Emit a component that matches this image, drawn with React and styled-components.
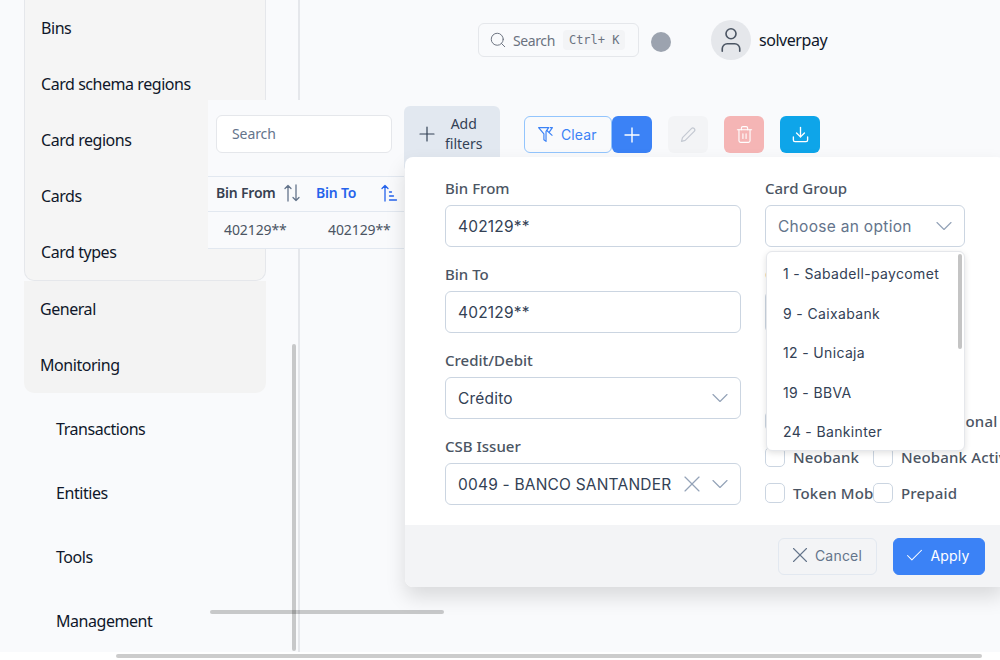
import React from 'react';
import styled, { createGlobalStyle } from 'styled-components';
import { Search, X, ChevronDown, Plus, Trash2, Download, Check, User } from 'lucide-react';

const Global = createGlobalStyle`
  html, body { margin: 0; padding: 0; height: 100%; overflow: hidden; background: #fff; }
  * { box-sizing: border-box; }
  body { font-family: "Noto Sans", sans-serif; color: #111827; }
`;

const FORM_FONT = '"Inter", "Noto Sans", sans-serif';

const Page = styled.div`
  position: relative;
  width: 1000px;
  height: 660px;
  overflow: hidden;
  background: #fff;
`;
const Viewport = styled.div`
  display: flex;
  height: 652px;
  background: #f9fafc;
`;
const Sidebar = styled.aside`
  width: 300px;
  flex: none;
  padding-left: 24px;
  border-right: 2px solid #e5e7eb;
  overflow: hidden;
`;
const NavCard = styled.div`
  width: 242px;
  background: #f5f5f5;
  border: 1px solid #e5e7eb;
  border-top: none;
  border-radius: 0 0 10px 10px;
`;
const NavGroup = styled.div`
  width: 242px;
  margin-bottom: 4px;
  background: #f3f3f3;
  border-radius: 0 0 10px 10px;
`;
const NavItem = styled.div`
  display: flex;
  align-items: center;
  height: ${p => p.$h || 56}px;
  padding-left: ${p => p.$indent || 0}px;
  font-size: 16px;
  color: #0f172a;
  letter-spacing: -0.45px;
`;
const Main = styled.main`
  flex: 1;
  min-width: 0;
`;
const Header = styled.header`
  display: flex;
  align-items: center;
  height: 80px;
  padding-left: 178px;
`;
const SearchBox = styled.div`
  display: flex;
  align-items: center;
  width: 161px;
  height: 34px;
  padding: 0 10px;
  gap: 6px;
  background: #f9fafc;
  border: 1px solid #e5e7eb;
  border-radius: 6px;
  color: #6b7280;
  font-size: 14px;
  letter-spacing: -0.4px;
`;
const Kbd = styled.span`
  margin-left: 2px;
  padding: 3px 5px 3px 6px;
  background: #f3f4f6;
  border-radius: 4px;
  font: 12px/14px "DejaVu Sans Mono", monospace;
  white-space: nowrap;
  letter-spacing: 0;
`;
const Dot = styled.span`
  width: 20px;
  height: 20px;
  margin: 3px 40px 0 12px;
  border-radius: 50%;
  background: #9ca3af;
`;
const Avatar = styled.span`
  display: flex;
  align-items: center;
  justify-content: center;
  width: 40px;
  height: 40px;
  border-radius: 50%;
  background: #e5e7eb;
  color: #4b5563;
`;
const UserName = styled.span`
  margin-left: 8px;
  font-size: 16px;
  letter-spacing: -0.45px;
  color: #0f172a;
`;
const Toolbar = styled.div`
  display: flex;
  align-items: flex-start;
  margin: 26px 0 0 104px;
`;
const AddFilters = styled.button`
  display: flex;
  align-items: center;
  gap: 6px;
  width: 96px;
  height: 66px;
  padding: 0 0 10px 11px;
  background: #e2e8f0;
  border: none;
  border-radius: 6px;
  color: #334155;
  font: 14px/20px "Noto Sans", sans-serif;
  text-align: center;
`;
const ClearButton = styled.button`
  display: flex;
  align-items: center;
  gap: 7px;
  width: 88px;
  height: 37px;
  margin: 10px 0 0 24px;
  padding: 0 0 0 12px;
  background: #f9fafc;
  border: 1px solid #93c5fd;
  border-radius: 6px;
  color: #3b82f6;
  font: 14px ${FORM_FONT};
  letter-spacing: 0.1px;
`;
const IconButton = styled.button`
  display: flex;
  align-items: center;
  justify-content: center;
  width: 40px;
  height: 37px;
  margin: 10px 0 0 ${p => p.$gap || 0}px;
  padding: 0;
  border: none;
  border-radius: 6px;
  background: ${p => p.$bg};
  color: ${p => p.$fg};
`;
const TableCard = styled.section`
  position: absolute;
  left: 208px;
  top: 100px;
  width: 196px;
  height: 149px;
  background: #f9fafc;
  border-bottom: 1px solid #e2e8f0;
`;
const TableSearch = styled.div`
  width: 176px;
  height: 38px;
  margin: 15px 0 23px 8px;
  padding: 0 0 2px 15px;
  display: flex;
  align-items: center;
  background: #fff;
  border: 1px solid #e5e7eb;
  border-radius: 6px;
  font-size: 14px;
  letter-spacing: -0.1px;
  color: #64748b;
`;
const HeadRow = styled.div`
  display: grid;
  grid-template-columns: 100px 96px;
  height: 36px;
  border-top: 1px solid #e2e8f0;
  border-bottom: 1px solid #e2e8f0;
`;
const HeadCell = styled.div`
  display: flex;
  align-items: center;
  justify-content: space-between;
  padding: 0 ${p => p.$pr}px 3px 8px;
  font-size: 14px;
  font-weight: 600;
  letter-spacing: -0.2px;
  color: ${p => (p.$active ? '#2563eb' : '#374151')};
  white-space: nowrap;
`;
const BodyRow = styled.div`
  display: grid;
  grid-template-columns: 104px 92px;
  height: 36px;
`;
const BodyCell = styled.div`
  display: flex;
  align-items: center;
  padding: 0 0 2px 16px;
  font-size: 14px;
  letter-spacing: -0.1px;
  color: #4b5563;
`;
const FilterPanel = styled.section`
  position: absolute;
  left: 405px;
  top: 157px;
  width: 600px;
  height: 430px;
  display: flex;
  flex-direction: column;
  background: #fff;
  border-radius: 8px;
  box-shadow: 0 10px 20px rgba(0, 0, 0, 0.13);
  font-family: ${FORM_FONT};
`;
const PanelBody = styled.div`
  flex: 1;
  display: grid;
  grid-template-columns: 296px 235px;
  column-gap: 24px;
  padding: 20px 0 0 40px;
`;
const Column = styled.div`
  display: flex;
  flex-direction: column;
  gap: 16px;
  min-width: 0;
`;
const Field = styled.div`
  width: ${p => p.$w || 296}px;
`;
const Label = styled.div`
  height: 24px;
  margin-bottom: 4px;
  font: 500 15px/23px "Noto Sans", sans-serif;
  color: #4b5563;
`;
const Input = styled.div`
  display: flex;
  align-items: center;
  justify-content: space-between;
  height: 42px;
  padding: 0 6px 0 12px;
  background: #fff;
  border: 1px solid #cbd5e1;
  border-radius: 6px;
  font-size: 15.5px;
  letter-spacing: ${p => (p.$placeholder ? 0.3 : 0.2)}px;
  color: ${p => (p.$placeholder ? '#64748b' : '#334155')};
  white-space: nowrap;
`;
const InputIcons = styled.span`
  display: flex;
  align-items: center;
  color: #94a3b8;
`;
const Dropdown = styled.div`
  position: absolute;
  left: 361px;
  top: 94px;
  width: 199px;
  height: 200px;
  padding-top: 2px;
  overflow: hidden;
  background: #fff;
  border: 1px solid #e5e7eb;
  border-radius: 6px;
  box-shadow: 0 2px 6px rgba(0, 0, 0, 0.12);
`;
const Option = styled.div`
  display: flex;
  align-items: center;
  height: 39.5px;
  padding-left: 16px;
  font-size: 14px;
  letter-spacing: 0.35px;
  color: #334155;
  white-space: nowrap;
`;
const DropThumb = styled.span`
  position: absolute;
  right: 2px;
  top: 2px;
  width: 4px;
  height: 95px;
  border-radius: 2px;
  background: #c4c4c4;
`;
const CheckGrid = styled.div`
  display: grid;
  grid-template-columns: 108px 127px;
  row-gap: 16px;
  margin-top: 62px;
`;
const CheckItem = styled.div`
  display: flex;
  align-items: center;
  gap: 8px;
  height: 20px;
  overflow: hidden;
  white-space: nowrap;
  font: 500 15px/20px "Noto Sans", sans-serif;
  letter-spacing: 0.15px;
  color: #4b5563;
`;
const Box = styled.span`
  flex: none;
  width: 20px;
  height: 20px;
  background: #fff;
  border: 1px solid #cbd5e1;
  border-radius: 5px;
`;
const PanelFooter = styled.footer`
  display: flex;
  justify-content: flex-end;
  gap: 16px;
  height: 62px;
  padding: 13px 20px 0 0;
  background: #f3f4f6;
  border-radius: 0 0 8px 8px;
`;
const FooterButton = styled.button`
  display: flex;
  align-items: center;
  justify-content: center;
  gap: ${p => (p.$primary ? 5 : 2)}px;
  width: ${p => p.$w}px;
  height: 37px;
  padding: 0 ${p => (p.$primary ? 4 : 6)}px 3px 0;
  border: 1px solid ${p => (p.$primary ? '#3b82f6' : '#e2e8f0')};
  border-radius: 6px;
  background: ${p => (p.$primary ? '#3b82f6' : 'transparent')};
  color: ${p => (p.$primary ? '#fff' : '#64748b')};
  font: 14px ${FORM_FONT};
  letter-spacing: 0.2px;
`;
const Scrollbar = styled.span`
  position: absolute;
  left: ${p => p.$x}px;
  top: ${p => p.$y}px;
  width: ${p => p.$w}px;
  height: ${p => p.$h}px;
  background: rgba(0, 0, 0, 0.2);
  border-radius: 2px;
`;

const FilterSlash = () => (
  <svg width="17" height="17" viewBox="0 0 16 16" fill="none" stroke="currentColor" strokeWidth="1.1" strokeLinejoin="round">
    <path d="M1.5 1.5h9.5L8.5 5v9.5L6.5 13V7.5z" />
    <path d="M12 1.5h2.5L11 6.5M9 4l5.5 5" />
  </svg>
);
const PencilIcon = () => (
  <svg width="16" height="16" viewBox="0 0 16 16" fill="none" stroke="currentColor" strokeWidth="1.2" strokeLinejoin="round">
    <path d="M11.4 1.6a1.9 1.9 0 0 1 2.8 2.7L5.2 13.4l-3.7 1 1-3.8z" />
  </svg>
);
const SortIdle = () => (
  <svg width="16" height="18" viewBox="0 0 16 18" fill="none" stroke="#64748b" strokeWidth="1.3" strokeLinecap="round" strokeLinejoin="round">
    <path d="M4 17V1.5M1 4.5l3-3 3 3M12 1v15.5M9 13.5l3 3 3-3" />
  </svg>
);
const SortAsc = () => (
  <svg width="18" height="18" viewBox="0 0 18 18" fill="none" stroke="#2563eb" strokeWidth="1.3" strokeLinecap="round" strokeLinejoin="round">
    <path d="M4 17V1.5M1 4.5l3-3 3 3M8.5 8h2M8.5 12h4M8.5 16h7" />
  </svg>
);

const sections = ['Bins', 'Card schema regions', 'Card regions', 'Cards', 'Card types'];
const subItems = ['Transactions', 'Entities', 'Tools', 'Management'];
const options = ['1 - Sabadell-paycomet', '9 - Caixabank', '12 - Unicaja', '19 - BBVA', '24 - Bankinter'];
const checks = ['Contactless', 'International', 'Neobank', 'Neobank Active', 'Token Mobile', 'Prepaid'];

export default function App() {
  return (
    <Page>
      <Global />
      <Viewport>
        <Sidebar>
          <NavCard>
            {sections.map(s => (
              <NavItem key={s} $indent={16}>{s}</NavItem>
            ))}
          </NavCard>
          <NavGroup>
            <NavItem $indent={16}>General</NavItem>
            <NavItem $indent={16}>Monitoring</NavItem>
          </NavGroup>
          {subItems.map(s => (
            <NavItem key={s} $h={64} $indent={32}>{s}</NavItem>
          ))}
        </Sidebar>
        <Main>
          <Header>
            <SearchBox>
              <Search size={18} strokeWidth={1.3} />
              <span>Search</span>
              <Kbd>Ctrl+ K</Kbd>
            </SearchBox>
            <Dot />
            <Avatar><User size={30} strokeWidth={1.3} /></Avatar>
            <UserName>solverpay</UserName>
          </Header>
          <Toolbar>
            <AddFilters>
              <Plus size={24} strokeWidth={1.2} />
              <span>Add<br />filters</span>
            </AddFilters>
            <ClearButton><FilterSlash />Clear</ClearButton>
            <IconButton $bg="#3b82f6" $fg="#fff"><Plus size={24} strokeWidth={1.4} /></IconButton>
            <IconButton $gap={16} $bg="#f3f4f6" $fg="#c4c9d2"><PencilIcon /></IconButton>
            <IconButton $gap={16} $bg="#f5b5b5" $fg="#fff"><Trash2 size={19} strokeWidth={1.4} /></IconButton>
            <IconButton $gap={16} $bg="#0ea5e9" $fg="#fff"><Download size={19} strokeWidth={1.7} /></IconButton>
          </Toolbar>
        </Main>
      </Viewport>

      <TableCard>
        <TableSearch>Search</TableSearch>
        <HeadRow>
          <HeadCell $pr={8}>Bin From <SortIdle /></HeadCell>
          <HeadCell $active $pr={5}>Bin To <SortAsc /></HeadCell>
        </HeadRow>
        <BodyRow>
          <BodyCell>402129**</BodyCell>
          <BodyCell>402129**</BodyCell>
        </BodyRow>
      </TableCard>

      <FilterPanel>
        <PanelBody>
          <Column>
            <Field><Label>Bin From</Label><Input>402129**</Input></Field>
            <Field><Label>Bin To</Label><Input>402129**</Input></Field>
            <Field>
              <Label>Credit/Debit</Label>
              <Input>Crédito<InputIcons><ChevronDown size={28} strokeWidth={1} /></InputIcons></Input>
            </Field>
            <Field>
              <Label>CSB Issuer</Label>
              <Input>
                0049 - BANCO SANTANDER
                <InputIcons><X size={28} strokeWidth={1} /><ChevronDown size={28} strokeWidth={1} /></InputIcons>
              </Input>
            </Field>
          </Column>
          <Column>
            <Field $w={200}>
              <Label>Card Group</Label>
              <Input $placeholder>
                Choose an option
                <InputIcons><ChevronDown size={28} strokeWidth={1} /></InputIcons>
              </Input>
            </Field>
            <Field $w={200}>
              <Label>Country</Label>
              <Input $placeholder>Choose an option</Input>
            </Field>
            <CheckGrid>
              {checks.map(c => (
                <CheckItem key={c}><Box />{c}</CheckItem>
              ))}
            </CheckGrid>
          </Column>
        </PanelBody>
        <PanelFooter>
          <FooterButton $w={99}><X size={26} strokeWidth={1} />Cancel</FooterButton>
          <FooterButton $w={92} $primary><Check size={21} strokeWidth={1.2} />Apply</FooterButton>
        </PanelFooter>
        <Dropdown>
          {options.map(o => <Option key={o}>{o}</Option>)}
          <DropThumb />
        </Dropdown>
      </FilterPanel>

      <Scrollbar $x={292} $y={344} $w={4} $h={307} />
      <Scrollbar $x={210} $y={610} $w={234} $h={4} />
      <Scrollbar $x={116} $y={654} $w={866} $h={4} />
    </Page>
  );
}
